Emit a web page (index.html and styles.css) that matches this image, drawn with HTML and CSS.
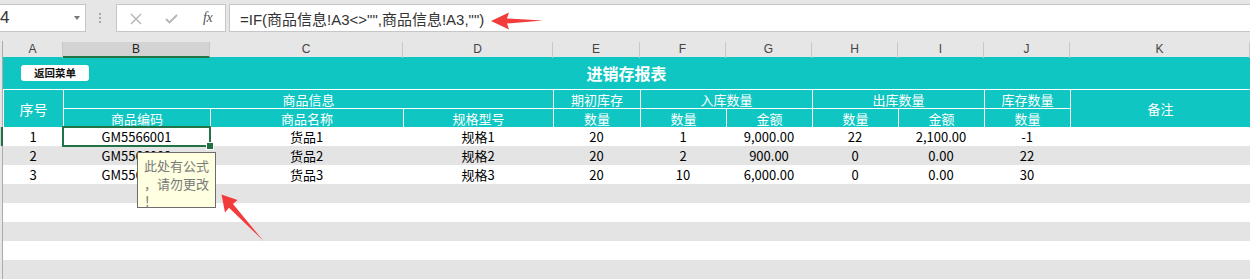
FILE: index.html
```html
<!DOCTYPE html>
<html lang="zh">
<head>
<meta charset="utf-8">
<title>进销存报表</title>
<link rel="stylesheet" href="styles.css">
</head>
<body>
<div class="app">
  <div class="fbar">
    <div class="namebox"><span class="nb-text">4</span><span class="nb-caret"></span></div>
    <div class="grip"><i></i><i></i><i></i></div>
    <div class="fbtns">
      <svg class="ico-x" width="12" height="12" viewBox="0 0 12 12"><path d="M1 1 L11 11 M11 1 L1 11" stroke="#b4b4b4" stroke-width="1.4" fill="none"/></svg>
      <svg class="ico-ok" width="13" height="10" viewBox="0 0 13 10"><path d="M1 5 L4.5 8.5 L12 1" stroke="#b4b4b4" stroke-width="1.8" fill="none"/></svg>
      <span class="ico-fx">fx</span>
    </div>
    <div class="finput">=IF(商品信息!A3&lt;&gt;"",商品信息!A3,"")</div>
  </div>

  <div class="colheads">
    <div class="corner"></div>
    <div class="ch">A</div>
    <div class="ch ch-sel">B</div>
    <div class="ch">C</div>
    <div class="ch">D</div>
    <div class="ch">E</div>
    <div class="ch">F</div>
    <div class="ch">G</div>
    <div class="ch">H</div>
    <div class="ch">I</div>
    <div class="ch">J</div>
    <div class="ch">K</div>
  </div>

  <div class="hdr">
    <div class="rh rh-hdr"></div>
    <div class="title"><span class="btn">返回菜单</span><span class="title-text">进销存报表</span></div>
    <div class="hc c-seq">序号</div>
    <div class="hc c-info">商品信息</div>
    <div class="hc c-open">期初库存</div>
    <div class="hc c-in">入库数量</div>
    <div class="hc c-out">出库数量</div>
    <div class="hc c-stock">库存数量</div>
    <div class="hc c-note">备注</div>
    <div class="hc">商品编码</div>
    <div class="hc">商品名称</div>
    <div class="hc">规格型号</div>
    <div class="hc">数量</div>
    <div class="hc">数量</div>
    <div class="hc">金额</div>
    <div class="hc">数量</div>
    <div class="hc">金额</div>
    <div class="hc">数量</div>
  </div>

  <div class="rows">
    <div class="row">
      <div class="rh rh-sel"></div>
      <div class="dc">1</div><div class="dc sel">GM5566001<span class="handle"></span></div><div class="dc">货品1</div><div class="dc">规格1</div><div class="dc">20</div><div class="dc">1</div><div class="dc">9,000.00</div><div class="dc">22</div><div class="dc">2,100.00</div><div class="dc">-1</div><div class="dc"></div>
    </div>
    <div class="row band">
      <div class="rh"></div>
      <div class="dc">2</div><div class="dc">GM5566002</div><div class="dc">货品2</div><div class="dc">规格2</div><div class="dc">20</div><div class="dc">2</div><div class="dc">900.00</div><div class="dc">0</div><div class="dc">0.00</div><div class="dc">22</div><div class="dc"></div>
    </div>
    <div class="row">
      <div class="rh"></div>
      <div class="dc">3</div><div class="dc">GM5566003</div><div class="dc">货品3</div><div class="dc">规格3</div><div class="dc">20</div><div class="dc">10</div><div class="dc">6,000.00</div><div class="dc">0</div><div class="dc">0.00</div><div class="dc">30</div><div class="dc"></div>
    </div>
    <div class="row band"><div class="rh"></div></div>
    <div class="row"><div class="rh"></div></div>
    <div class="row band"><div class="rh"></div></div>
    <div class="row"><div class="rh"></div></div>
    <div class="row band"><div class="rh"></div></div>
  </div>

  <div class="comment">此处有公式<br>，请勿更改<br>！</div>

  <svg class="arrow arrow-1" width="60" height="24" viewBox="488 9 60 24">
    <polygon points="491,21 509,12.5 507,18.5 543,20.5 507,23.5 509,29.5" fill="#f23b3b"/>
  </svg>
  <svg class="arrow arrow-2" width="50" height="54" viewBox="218 191 50 54">
    <polygon points="221.5,194.5 237.5,200 233,204 263.5,241 229,207.8 225,212.5" fill="#f23b3b"/>
  </svg>
</div>
</body>
</html>
```

FILE: styles.css
```css
* { box-sizing: border-box; }
html, body { margin: 0; padding: 0; }
body {
  width: 1250px;
  height: 279px;
  overflow: hidden;
  background: #ffffff;
  font-family: "Noto Sans CJK SC", "Noto Sans", sans-serif;
  color: #000;
}
.app {
  position: relative;
  width: 1250px;
  height: 279px;
  overflow: hidden;
  --cols: 3px 60px 147px 193px 150px 87px 86px 86px 86px 86px 86px 180px;
}

/* formula bar */
.fbar {
  height: 41px;
  background: #e6e6e6;
  display: flex;
  align-items: flex-start;
  padding-top: 4px;
}
.namebox {
  width: 87px;
  height: 28px;
  margin-left: -1px;
  background: #fff;
  border: 1px solid #c6c6c6;
  display: flex;
  align-items: center;
  justify-content: space-between;
  padding: 0 5px 0 0;
}
.nb-text {
  font-family: "Liberation Sans", sans-serif;
  font-size: 17px;
  color: #333;
  margin-left: 0;
}
.nb-caret {
  width: 0; height: 0;
  border-left: 3.5px solid transparent;
  border-right: 3.5px solid transparent;
  border-top: 4px solid #777;
  margin-top: -1px;
}
.grip {
  width: 4px;
  margin-left: 13px;
  margin-top: 9px;
  display: flex;
  flex-direction: column;
  gap: 2px;
}
.grip i {
  display: block;
  width: 2px;
  height: 2px;
  background: #a8a8a8;
}
.fbtns {
  margin-left: 13px;
  width: 110px;
  height: 28px;
  background: #fff;
  border: 1px solid #c6c6c6;
  display: flex;
  align-items: center;
  padding-left: 13px;
}
.ico-x { margin-top: 1px; }
.ico-ok { margin-left: 23px; margin-top: 1px; }
.ico-fx {
  margin-left: 25px;
  font-family: "Liberation Serif", serif;
  font-style: italic;
  font-size: 14px;
  color: #555;
  letter-spacing: -0.5px;
}
.finput {
  margin-left: 3px;
  flex: 1;
  height: 28px;
  margin-right: -2px;
  background: #fff;
  border: 1px solid #c6c6c6;
  display: flex;
  align-items: center;
  padding-left: 10px;
  font-family: "Liberation Sans", "Noto Sans CJK SC", sans-serif;
  font-size: 15px;
  color: #333;
  white-space: nowrap;
}

/* column headers */
.colheads {
  display: grid;
  grid-template-columns: var(--cols);
  height: 16px;
  background: #e6e6e6;
}
.corner { border-right: 1px solid #ababab; }
.ch {
  font-family: "Liberation Sans", sans-serif;
  font-size: 12px;
  color: #444;
  text-align: center;
  line-height: 15px;
  border-right: 1px solid #c8c8c8;
  margin-top: 1px;
}
.ch-sel {
  background: #d3d3d3;
  border-bottom: 2px solid #217346;
  line-height: 14px;
  color: #222;
}

/* teal header block */
.hdr {
  display: grid;
  grid-template-columns: var(--cols);
  grid-template-rows: 32px 19px 19px;
  background: #10c6c2;
  color: #fff;
}
.rh {
  background: #e6e6e6;
  border-right: 1px solid #ababab;
}
.rh-hdr { grid-row: 1 / 4; grid-column: 1; }
.rh-sel { border-right: 2px solid #217346; background: #d3d3d3; }
.title {
  grid-column: 2 / 13;
  grid-row: 1;
  position: relative;
  display: flex;
  align-items: center;
  justify-content: center;
}
.title-text {
  font-size: 16px;
  font-weight: bold;
  letter-spacing: 0;
  margin-top: -1px;
}
.btn {
  position: absolute;
  left: 18px;
  top: 8px;
  width: 68px;
  height: 16px;
  background: #fff;
  border-radius: 3px;
  color: #111;
  font-size: 10.5px;
  font-weight: bold;
  text-align: center;
  line-height: 16px;
}
.hc {
  border-top: 1px solid #fff;
  border-left: 1px solid #fff;
  font-size: 13px;
  display: flex;
  align-items: center;
  justify-content: center;
  line-height: 1;
  white-space: nowrap;
}
.c-seq { grid-column: 2; grid-row: 2 / 4; font-size: 14px; }
.c-info { grid-column: 3 / 6; grid-row: 2; }
.c-open { grid-column: 6; grid-row: 2; }
.c-in { grid-column: 7 / 9; grid-row: 2; }
.c-out { grid-column: 9 / 11; grid-row: 2; }
.c-stock { grid-column: 11; grid-row: 2; }
.c-note { grid-column: 12; grid-row: 2 / 4; }

/* data rows */
.row {
  display: grid;
  grid-template-columns: var(--cols);
  height: 19px;
  background: #fff;
}
.row.band { background: #e4e4e4; }
.dc {
  font-size: 13px;
  text-align: center;
  line-height: 19px;
  white-space: nowrap;
  color: #000;
}
.sel {
  position: relative;
  z-index: 1;
  outline: 2px solid #217346;
  outline-offset: -1px;
}
.handle {
  position: absolute;
  right: -4px;
  bottom: -4px;
  width: 6px;
  height: 6px;
  background: #217346;
  border: 1px solid #fff;
  box-sizing: content-box;
}

/* overlays */
.comment {
  position: absolute;
  left: 137px;
  top: 152px;
  width: 79px;
  height: 56px;
  background: #ffffe1;
  border: 1px solid #6d6d6d;
  z-index: 3;
  font-size: 13px;
  line-height: 17.5px;
  color: #7a7a7a;
  padding: 4px 0 0 6px;
}
.arrow {
  position: absolute;
  z-index: 4;
}
.arrow-1 { left: 488px; top: 9px; }
.arrow-2 { left: 218px; top: 191px; }
```
